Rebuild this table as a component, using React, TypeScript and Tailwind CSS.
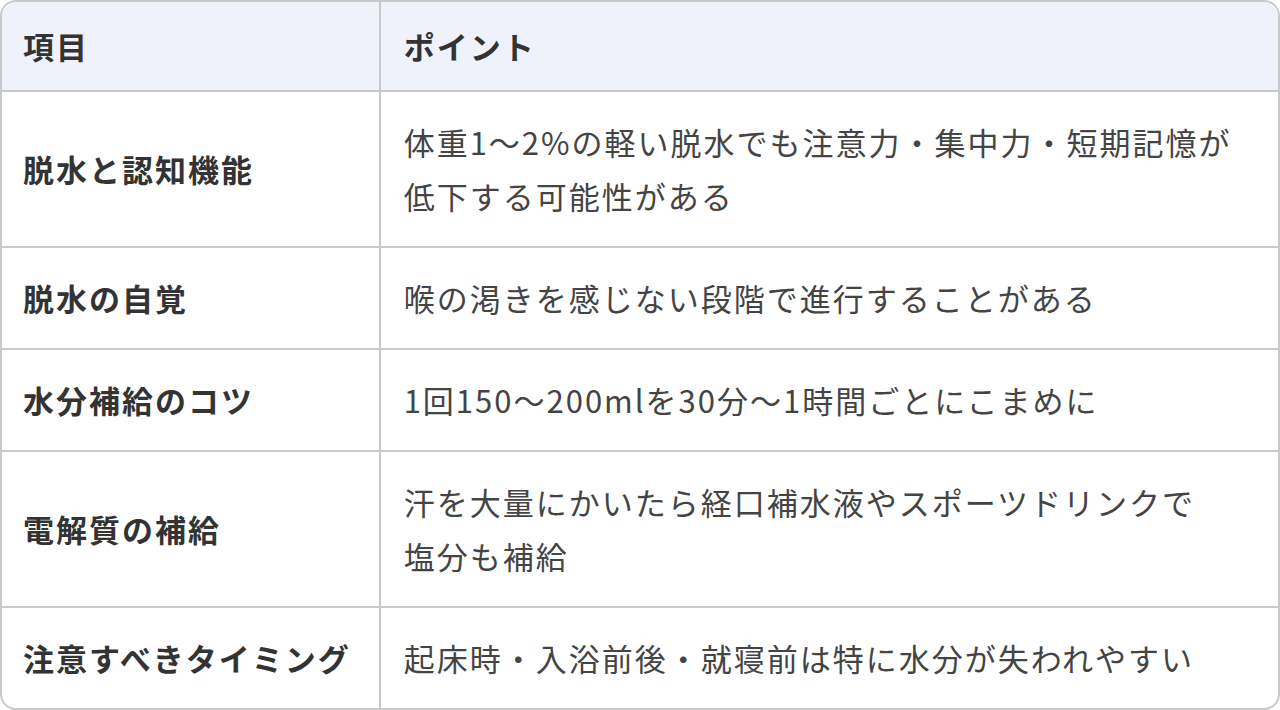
const ROWS = [
  {
    item: "脱水と認知機能",
    point: ["体重1〜2%の軽い脱水でも注意力・集中力・短期記憶が", "低下する可能性がある"],
  },
  { item: "脱水の自覚", point: ["喉の渇きを感じない段階で進行することがある"] },
  { item: "水分補給のコツ", point: ["1回150〜200mlを30分〜1時間ごとにこまめに"] },
  {
    item: "電解質の補給",
    point: ["汗を大量にかいたら経口補水液やスポーツドリンクで", "塩分も補給"],
  },
  {
    item: "注意すべきタイミング",
    point: ["起床時・入浴前後・就寝前は特に水分が失われやすい"],
  },
];

export default function App() {
  return (
    <div
      className="w-[1280px] h-[710px] bg-white"
      style={{ fontFamily: '"Noto Sans CJK JP", "Noto Sans", sans-serif' }}
    >
      <div className="overflow-hidden rounded-[16px] border-2 border-[#c9c9c9]">
        <table className="w-full border-collapse text-[31px] leading-[54px] tracking-[2px]">
          <thead>
            <tr className="bg-[#eff2fb]">
              <th className="whitespace-nowrap border-b-2 border-r-2 border-[#c9c9c9] pl-[21px] pr-[18px] py-[17px] text-left font-bold text-[#333333]">
                項目
              </th>
              <th className="border-b-2 border-[#c9c9c9] px-[23px] py-[17px] text-left font-bold text-[#333333]">
                ポイント
              </th>
            </tr>
          </thead>
          <tbody>
            {ROWS.map((row, i) => {
              const last = i === ROWS.length - 1;
              return (
                <tr key={row.item}>
                  <td
                    className={
                      "whitespace-nowrap border-r-2 border-[#c9c9c9] pl-[21px] pr-[18px] py-[23px] font-bold text-[#333333] " +
                      (last ? "" : "border-b-2")
                    }
                  >
                    {row.item}
                  </td>
                  <td
                    className={
                      "border-[#c9c9c9] px-[23px] py-[23px] text-[#444444] " +
                      (last ? "" : "border-b-2")
                    }
                  >
                    {row.point.map((line) => (
                      <div key={line}>{line}</div>
                    ))}
                  </td>
                </tr>
              );
            })}
          </tbody>
        </table>
      </div>
    </div>
  );
}
